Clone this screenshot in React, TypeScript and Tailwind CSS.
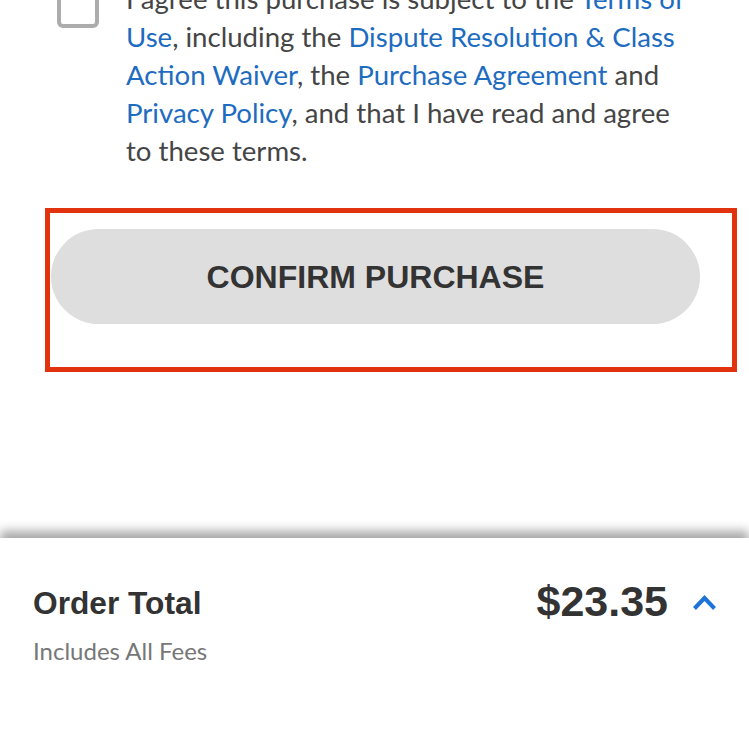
import React from 'react';

const Link = ({ children }: { children: React.ReactNode }) => (
  <a className="text-[#1e6cc0]">{children}</a>
);

const App = () => {
  return (
    <div className="w-[749px] h-[749px] overflow-hidden bg-white flex flex-col">
      <div className="flex items-start -mt-[20px] pl-[57px]">
        <div className="w-[42px] h-[42px] shrink-0 mt-[6px] border-[4px] border-[#acacac] rounded-[6px]"></div>
        <p
          className="ml-[27px] w-[575px] text-[27.6px] leading-[38px] text-[#454545]"
          style={{ fontFamily: 'Lato, sans-serif' }}
        >
          I agree this purchase is subject to the <Link>Terms of Use</Link>, including the{' '}
          <Link>Dispute Resolution &amp; Class Action Waiver</Link>, the <Link>Purchase Agreement</Link> and{' '}
          <Link>Privacy Policy</Link>, and that I have read and agree to these terms.
        </p>
      </div>

      <div className="mt-[38px] ml-[45px] w-[692px] h-[164px] border-[5px] border-[#e2330f] pt-[16px] pl-[1px]">
        <button
          className="w-[649px] h-[95px] rounded-full bg-[#dedede] text-[#333] text-[32px] font-bold"
          style={{ fontFamily: '"Liberation Sans", Arial, sans-serif' }}
        >
          CONFIRM PURCHASE
        </button>
      </div>

      <div
        className="mt-auto h-[211px] bg-white shadow-[0_-7px_10px_rgba(0,0,0,0.35)] flex justify-between pl-[33px] pr-[32px] pt-[47px]"
        style={{ fontFamily: '"Liberation Sans", Arial, sans-serif' }}
      >
        <div>
          <div className="text-[31.7px] leading-[36px] font-bold text-[#333]">Order Total</div>
          <div
            className="mt-[15px] text-[24px] leading-[30px] text-[#777]"
            style={{ fontFamily: 'Lato, sans-serif' }}
          >
            Includes All Fees
          </div>
        </div>
        <div className="flex items-start -mt-[8px]">
          <div className="text-[43px] leading-[48px] font-bold text-[#333]">$23.35</div>
          <svg className="ml-[24px] mt-[17px]" width="25" height="17" viewBox="0 0 25 17" fill="none">
            <path d="M2.5 14.5 L12.5 4 L22.5 14.5" stroke="#1e73d8" strokeWidth="4" />
          </svg>
        </div>
      </div>
    </div>
  );
};

export default App;
